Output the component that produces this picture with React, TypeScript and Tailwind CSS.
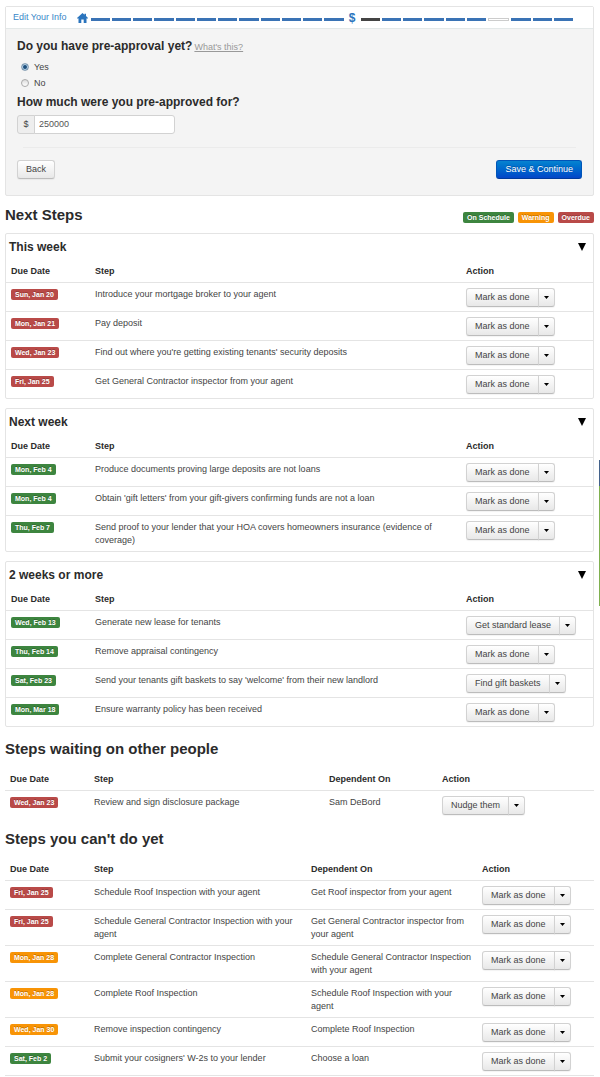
import { useState } from 'react';
import clsx from 'clsx';

type Status = 'ok' | 'warning' | 'overdue';

type Step = {
  date: string;
  status: Status;
  step: string;
  dependsOn?: string;
  action?: string;
};

const badgeColors: Record<Status, string> = {
  ok: 'bg-[#3d853f]',
  warning: 'bg-[#f89406]',
  overdue: 'bg-[#b94a48]',
};

const thisWeek: Step[] = [
  { date: 'Sun, Jan 20', status: 'overdue', step: 'Introduce your mortgage broker to your agent' },
  { date: 'Mon, Jan 21', status: 'overdue', step: 'Pay deposit' },
  { date: 'Wed, Jan 23', status: 'overdue', step: "Find out where you're getting existing tenants' security deposits" },
  { date: 'Fri, Jan 25', status: 'overdue', step: 'Get General Contractor inspector from your agent' },
];

const nextWeek: Step[] = [
  { date: 'Mon, Feb 4', status: 'ok', step: 'Produce documents proving large deposits are not loans' },
  { date: 'Mon, Feb 4', status: 'ok', step: "Obtain 'gift letters' from your gift-givers confirming funds are not a loan" },
  { date: 'Thu, Feb 7', status: 'ok', step: 'Send proof to your lender that your HOA covers homeowners insurance (evidence of coverage)' },
];

const later: Step[] = [
  { date: 'Wed, Feb 13', status: 'ok', step: 'Generate new lease for tenants', action: 'Get standard lease' },
  { date: 'Thu, Feb 14', status: 'ok', step: 'Remove appraisal contingency' },
  { date: 'Sat, Feb 23', status: 'ok', step: "Send your tenants gift baskets to say 'welcome' from their new landlord", action: 'Find gift baskets' },
  { date: 'Mon, Mar 18', status: 'ok', step: 'Ensure warranty policy has been received' },
];

const waiting: Step[] = [
  { date: 'Wed, Jan 23', status: 'overdue', step: 'Review and sign disclosure package', dependsOn: 'Sam DeBord', action: 'Nudge them' },
];

const blocked: Step[] = [
  { date: 'Fri, Jan 25', status: 'overdue', step: 'Schedule Roof Inspection with your agent', dependsOn: 'Get Roof inspector from your agent' },
  { date: 'Fri, Jan 25', status: 'overdue', step: 'Schedule General Contractor Inspection with your agent', dependsOn: 'Get General Contractor inspector from your agent' },
  { date: 'Mon, Jan 28', status: 'warning', step: 'Complete General Contractor Inspection', dependsOn: 'Schedule General Contractor Inspection with your agent' },
  { date: 'Mon, Jan 28', status: 'warning', step: 'Complete Roof Inspection', dependsOn: 'Schedule Roof Inspection with your agent' },
  { date: 'Wed, Jan 30', status: 'warning', step: 'Remove inspection contingency', dependsOn: 'Complete Roof Inspection' },
  { date: 'Sat, Feb 2', status: 'ok', step: "Submit your cosigners' W-2s to your lender", dependsOn: 'Choose a loan' },
];

const button =
  'h-[19px] border border-[#d2d2d2] border-b-[#bcbcbc] bg-linear-to-b from-white to-[#e8e8e8] text-[#444] shadow-[0_1px_1px_rgba(0,0,0,0.05)]';

function Badge({ status, children }: { status: Status; children: React.ReactNode }) {
  return (
    <span
      className={clsx(
        'block w-fit rounded-[2px] px-1 text-[7px] leading-[11px] font-bold whitespace-nowrap text-white text-shadow-[0_-1px_0_rgba(0,0,0,0.25)]',
        badgeColors[status]
      )}
    >
      {children}
    </span>
  );
}

function SplitButton({ label }: { label: string }) {
  return (
    <div className="flex">
      <button type="button" className={clsx(button, 'rounded-l-[3px] px-2 whitespace-nowrap')}>
        {label}
      </button>
      <button
        type="button"
        aria-label={`More options for ${label}`}
        className={clsx(button, '-ml-px flex w-[17px] items-center justify-center rounded-r-[3px]')}
      >
        <svg width="5" height="3" viewBox="0 0 5 3" aria-hidden="true">
          <path d="M0 0h5L2.5 3z" fill="#000" />
        </svg>
      </button>
    </div>
  );
}

function StepTable({ steps, dependentCol, actionCol }: { steps: Step[]; dependentCol?: string; actionCol: string }) {
  const th = 'px-[5px] pt-[5px] pb-1 text-left font-bold text-[#2b2b2b]';
  const td = 'border-t border-[#e4e4e4] px-[5px] pt-[5px] pb-1 align-top';

  return (
    <table className="w-full table-fixed border-separate border-spacing-0">
      <thead>
        <tr>
          <th className={clsx(th, 'w-[84px]')}>Due Date</th>
          <th className={th}>Step</th>
          {dependentCol && <th className={clsx(th, dependentCol)}>Dependent On</th>}
          <th className={clsx(th, actionCol)}>Action</th>
        </tr>
      </thead>
      <tbody>
        {steps.map((s, i) => (
          <tr key={i}>
            <td className={td}>
              <div className="py-px">
                <Badge status={s.status}>{s.date}</Badge>
              </div>
            </td>
            <td className={td}>{s.step}</td>
            {dependentCol && <td className={td}>{s.dependsOn}</td>}
            <td className={td}>
              <SplitButton label={s.action ?? 'Mark as done'} />
            </td>
          </tr>
        ))}
      </tbody>
    </table>
  );
}

function StepGroup({ title, steps }: { title: string; steps: Step[] }) {
  const [open, setOpen] = useState(true);

  return (
    <section className="rounded-[2px] border border-[#e4e4e4]">
      <div className="flex h-[26px] items-center justify-between pr-[7px] pl-[3px]">
        <h3 className="text-[12px] leading-4 font-bold text-[#2b2b2b]">{title}</h3>
        <button type="button" aria-label={`Toggle ${title}`} aria-expanded={open} onClick={() => setOpen(!open)}>
          <svg width="8" height="8" viewBox="0 0 8 8" aria-hidden="true">
            <path d="M0 0h8L4 8z" fill="#000" />
          </svg>
        </button>
      </div>
      {open && <StepTable steps={steps} actionCol="w-[132px]" />}
    </section>
  );
}

function Progress() {
  const bar = 'mb-[3px] h-[3px] flex-1';

  return (
    <div className="flex flex-1 items-end gap-[2px]">
      <svg className="mr-px mb-px shrink-0" width="11" height="10" viewBox="0 0 11 10" aria-hidden="true">
        <path d="M5.5 0 7.500 1.800V.8h1.500v2.300L11 5l-.7.800-.8-.6V10H6.700V6.500H4.300V10H1.500V5.200l-.8.600L0 5z" fill="#2a74bd" />
      </svg>
      {Array.from({ length: 12 }, (_, i) => (
        <span key={i} className={clsx(bar, 'bg-[#3a73b5]')} />
      ))}
      <span className="w-[13px] text-center text-[12px] leading-3 font-bold text-[#2a74bd]">$</span>
      {Array.from({ length: 10 }, (_, i) => (
        <span
          key={i}
          className={clsx(bar, i === 0 && 'bg-[#444]', i === 6 && 'border border-[#ccc] bg-white', i !== 0 && i !== 6 && 'bg-[#3a73b5]')}
        />
      ))}
    </div>
  );
}

function PreApprovalForm() {
  const [approved, setApproved] = useState('yes');
  const [amount, setAmount] = useState('250000');
  const radio =
    'size-2 appearance-none rounded-full border border-[#aaa] bg-linear-to-b from-[#ddd] to-white checked:border-[#8ba3b8] checked:from-[#1c4f7c] checked:to-[#1c4f7c] checked:shadow-[inset_0_0_0_1px_#b9d3e8]';

  return (
    <form className="rounded-[2px] border border-[#e4e4e4] bg-[#f4f4f4]" onSubmit={(e) => e.preventDefault()}>
      <div className="flex h-[22px] items-center gap-[10px] border-b border-[#e3e8e8] bg-white pr-5 pl-[7px]">
        <a href="#" className="text-[#3a87c8]">
          Edit Your Info
        </a>
        <Progress />
      </div>

      <div className="px-[11px] pt-[9px] pb-4">
        <fieldset>
          <legend className="flex items-baseline gap-[2px] leading-4">
            <span className="text-[12px] font-bold text-[#2b2b2b]">Do you have pre-approval yet?</span>
            <a href="#" className="text-[#999] underline">
              What's this?
            </a>
          </legend>
          <div className="mt-1 pl-1">
            {['Yes', 'No'].map((option) => (
              <label key={option} className="flex h-4 items-center gap-[5px]">
                <input
                  type="radio"
                  name="approved"
                  className={radio}
                  checked={approved === option.toLowerCase()}
                  onChange={() => setApproved(option.toLowerCase())}
                />
                {option}
              </label>
            ))}
          </div>
        </fieldset>

        <label htmlFor="amount" className="mt-[3px] block text-[12px] leading-4 font-bold text-[#2b2b2b]">
          How much were you pre-approved for?
        </label>
        <div className="mt-[5px] flex h-[19px]">
          <span className="flex w-[18px] items-center justify-center rounded-l-[3px] border border-[#d2d2d2] bg-[#eee]">$</span>
          <input
            id="amount"
            type="text"
            className="-ml-px w-[141px] rounded-r-[3px] border border-[#d2d2d2] bg-white px-1 text-[#555]"
            value={amount}
            onChange={(e) => setAmount(e.target.value)}
          />
        </div>

        <hr className="mx-[6px] mt-[13px] border-[#ebebeb]" />

        <div className="mt-3 flex justify-between">
          <button type="button" className={clsx(button, 'rounded-[3px] px-2')}>
            Back
          </button>
          <button
            type="submit"
            className="h-[19px] rounded-[3px] border border-[#0055b8] border-b-[#003a9c] bg-linear-to-b from-[#0883d0] to-[#0645c8] px-2 text-white text-shadow-[0_-1px_0_rgba(0,0,0,0.25)]"
          >
            Save &amp; Continue
          </button>
        </div>
      </div>
    </form>
  );
}

export default function App() {
  const heading = 'text-[15px] leading-5 font-bold text-[#2b2b2b]';

  return (
    <div className="relative overflow-hidden bg-white pt-[6px] pr-[6px] pl-[5px] font-['Liberation_Sans',Arial,sans-serif] text-[9px] leading-[13px] text-[#444]">
      <PreApprovalForm />

      <div className="mt-[9px] mb-2 flex items-center justify-between">
        <h2 className={heading}>Next Steps</h2>
        <div className="flex gap-1 pt-1">
          <Badge status="ok">On Schedule</Badge>
          <Badge status="warning">Warning</Badge>
          <Badge status="overdue">Overdue</Badge>
        </div>
      </div>

      <div className="flex flex-col gap-[9px]">
        <StepGroup title="This week" steps={thisWeek} />
        <StepGroup title="Next week" steps={nextWeek} />
        <StepGroup title="2 weeks or more" steps={later} />
      </div>

      <h2 className={clsx(heading, 'mt-3 mb-[9px]')}>Steps waiting on other people</h2>
      <StepTable steps={waiting} dependentCol="w-[113px]" actionCol="w-[157px]" />

      <h2 className={clsx(heading, 'mt-[10px] mb-[9px]')}>Steps you can't do yet</h2>
      <div className="border-b border-[#e4e4e4]">
        <StepTable steps={blocked} dependentCol="w-[171px]" actionCol="w-[117px]" />
      </div>

      {/* Feedback tab peeking in from the right edge */}
      <div className="absolute top-[460px] right-0 h-[146px] w-px bg-[#7fb04f]">
        <div className="h-[26px] bg-[#43618a]" />
      </div>
    </div>
  );
}
